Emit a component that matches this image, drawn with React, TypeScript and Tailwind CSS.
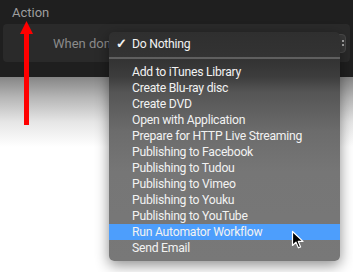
import React from "react";

const items = [
  "Add to iTunes Library",
  "Create Blu-ray disc",
  "Create DVD",
  "Open with Application",
  "Prepare for HTTP Live Streaming",
  "Publishing to Facebook",
  "Publishing to Tudou",
  "Publishing to Vimeo",
  "Publishing to Youku",
  "Publishing to YouTube",
  "Run Automator Workflow",
  "Send Email",
];

function Cursor() {
  return (
    <svg width="14" height="20" viewBox="0 0 14 20" className="absolute left-[291px] top-[230px]">
      <path
        d="M1.5 1.5 L1.5 15.5 L5 12.2 L7.4 17.8 L9.6 16.9 L7.3 11.4 L12 11.4 Z"
        fill="#000"
        stroke="#fff"
        strokeWidth="1.2"
        strokeLinejoin="round"
      />
    </svg>
  );
}

function RedArrow() {
  return (
    <svg width="16" height="106" viewBox="0 0 16 106" className="absolute left-[19px] top-[20px]">
      <polygon points="7.5,1 1,14 14,14" fill="#ff0000" />
      <rect x="5" y="12" width="5" height="93" fill="#ff0000" />
    </svg>
  );
}

export default function App() {
  return (
    <div className="relative w-[353px] h-[272px] overflow-hidden bg-white font-['Roboto',Arial,sans-serif]">
      {/* dark preferences area */}
      <div className="h-[77px] bg-[#1f1f1f] flex flex-col">
        <div className="pl-[12px] pt-[3px] h-[24px] text-[13px] text-[#9e9e9e]">Action</div>
        <div className="ml-[3px] mr-[3px] h-[38px] rounded-[4px] bg-[#2a2a2a] flex items-center">
          {/* label is cut where the open menu covers it */}
          <div className="ml-[50px] w-[56px] shrink-0 overflow-hidden">
            <span className="text-[13px] text-[#8b8b8b] whitespace-nowrap">When done:</span>
          </div>
          <div className="flex-1 ml-[4px] mr-[4px] h-[19px] rounded-[4px] bg-[#3a3a3a] border border-[#4a4a4a] flex items-center justify-end pr-[1px]">
            <div className="flex flex-col gap-[2px] items-center">
              <span className="w-[2px] h-[2px] bg-[#aaa]" />
              <span className="w-[2px] h-[2px] bg-[#aaa]" />
            </div>
          </div>
        </div>
      </div>
      {/* light area below */}
      <div className="h-[195px] bg-[linear-gradient(to_bottom,#858585_0px,#b5b5b5_20px,#e6e6e6_45px,#ffffff_70px)]" />

      <RedArrow />

      {/* popup menu */}
      <div className="absolute left-[109px] top-[32px] w-[231px] h-[229px] rounded-[5px] pt-[4px] shadow-[0_4px_14px_rgba(0,0,0,0.45)] bg-[linear-gradient(to_bottom,#2f2f2f_0px,#343434_30px,#3d3d3d_45px,#555_60px,#6c6c6c_100px,#767676_140px,#787878_229px)] text-[12.2px] tracking-[-0.25px] text-[#f2f2f2]">
        <div className="h-[16px] flex items-center">
          <span className="w-[23px] pl-[7px] text-[13px] font-bold">✓</span>
          <span>Do Nothing</span>
        </div>
        <div className="h-[12px] flex items-center">
          <div className="w-full h-[2px] bg-[#5f5f5f]" />
        </div>
        {items.map((it) => (
          <div
            key={it}
            className={
              it === "Run Automator Workflow"
                ? "h-[16px] flex items-center pl-[23px] bg-[#4d9efc]"
                : "h-[16px] flex items-center pl-[23px]"
            }
          >
            {it}
          </div>
        ))}
      </div>

      <Cursor />
    </div>
  );
}
